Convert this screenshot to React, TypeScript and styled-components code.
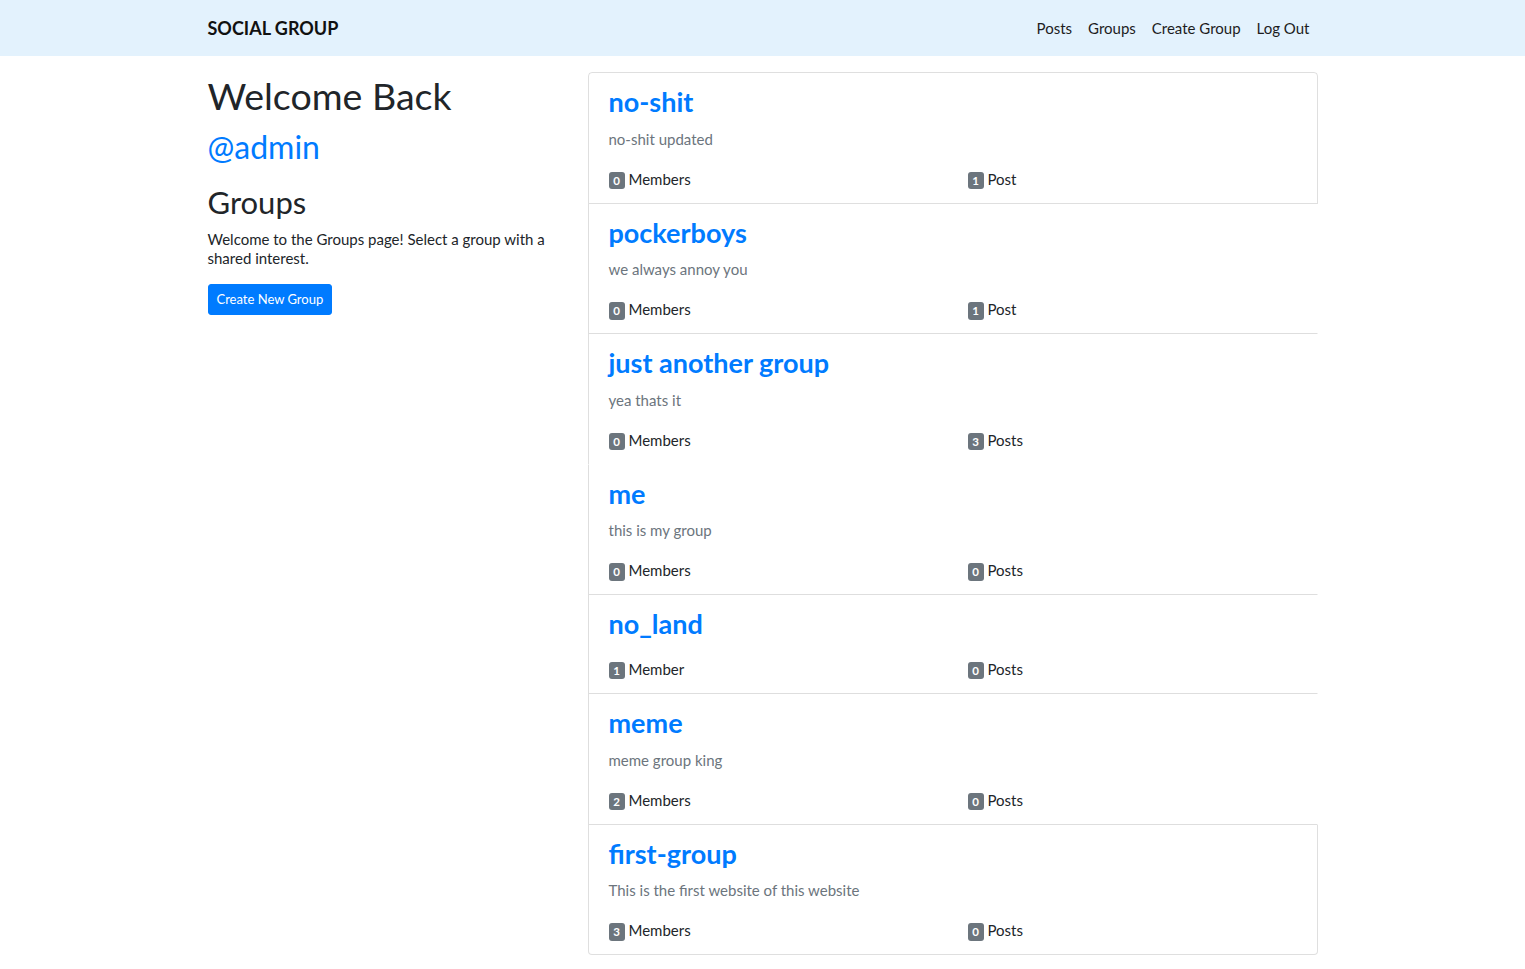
import React from "react";
import styled, { createGlobalStyle } from "styled-components";

const Global = createGlobalStyle`
  * { box-sizing: border-box; }
  body {
    margin: 0;
    font-family: Lato, "Noto Sans", sans-serif;
    font-size: 16px;
    line-height: 1.5;
    color: #212529;
    background: #fff;
  }
`;

const Navbar = styled.nav`
  background: #e3f2fd;
  height: 56px;
  padding: 8px 0;
`;

const Container = styled.div`
  width: 1140px;
  margin: 0 auto;
  padding: 0 15px;
`;

const NavInner = styled(Container)`
  display: flex;
  align-items: center;
  justify-content: space-between;
  height: 40px;
`;

const Brand = styled.a`
  font-size: 18px;
  font-weight: 700;
  color: #111;
  text-decoration: none;
  line-height: 30px;
`;

const NavLinks = styled.div`
  display: flex;
`;

const NavLink = styled.a`
  padding: 8px 8px;
  font-size: 15px;
  color: #1d1d1d;
  text-decoration: none;
  line-height: 24px;
`;

const Main = styled(Container)`
  display: grid;
  grid-template-columns: 380px 760px;
  margin: 16px auto 0;
  padding: 0;
`;

const Side = styled.div`
  padding: 0 15px;
`;

const Content = styled.div`
  padding: 0 15px;
`;

const H1 = styled.h1`
  font-size: 37.5px;
  font-weight: 400;
  line-height: 48px;
  margin: 0 0 8px;
`;

const H2 = styled.h2<{ $blue?: boolean; $mt?: number }>`
  font-size: ${(p) => (p.$blue ? 32 : 31)}px;
  font-weight: 400;
  line-height: 38.4px;
  margin: ${(p) => p.$mt ?? 0}px 0 8px;
  color: ${(p) => (p.$blue ? "#007bff" : "#212529")};
`;

const Lead = styled.p`
  margin: 0 0 16px;
  font-size: 15px;
  line-height: 19px;
`;

const Button = styled.button`
  font-family: inherit;
  font-size: 13px;
  line-height: 21px;
  padding: 4px 8px;
  border: 1px solid #007bff;
  border-radius: 3px;
  background: #007bff;
  color: #fff;
  white-space: nowrap;
  min-width: 124px;
`;

const List = styled.div`
  display: flex;
  flex-direction: column;
`;

const Item = styled.div<{
  $first?: boolean;
  $last?: boolean;
  $right?: boolean;
  $bottom?: boolean;
}>`
  padding: 12px 20px;
  border-left: 1px solid rgba(0, 0, 0, 0.125);
  border-right: 1px solid ${(p) => (p.$right ? "rgba(0,0,0,0.125)" : "transparent")};
  border-top: ${(p) => (p.$first ? "1px solid rgba(0,0,0,0.125)" : "0")};
  border-bottom: 1px solid ${(p) => (p.$bottom ? "rgba(0,0,0,0.125)" : "transparent")};
  border-radius: ${(p) =>
    p.$first ? "4px 4px 0 0" : p.$last ? "0 0 4px 4px" : "0"};
`;

const Title = styled.a<{ $mb: number }>`
  display: block;
  font-size: 27px;
  font-weight: 700;
  line-height: 33.6px;
  color: #007bff;
  text-decoration: none;
  margin-bottom: ${(p) => p.$mb}px;
`;

const Desc = styled.p`
  margin: 0 0 16px;
  color: #6c757d;
  font-size: 15px;
  line-height: 24px;
`;

const Stats = styled.div`
  display: grid;
  grid-template-columns: 1fr 1fr;
  margin: 0 -15px;
`;

const Stat = styled.div`
  padding: 0 15px;
  font-size: 15px;
  line-height: 24px;
`;

const Badge = styled.span`
  display: inline-block;
  background: #6c757d;
  color: #fff;
  font-size: 11.5px;
  font-weight: 700;
  line-height: 1;
  padding: 3px 4px;
  border-radius: 3px;
  margin-right: 4px;
  vertical-align: baseline;
  min-width: 16px;
  text-align: center;
`;

type Group = {
  name: string;
  desc?: string;
  members: number;
  posts: number;
  right: boolean;
  bottom: boolean;
};

const groups: Group[] = [
  { name: "no-shit", desc: "no-shit updated", members: 0, posts: 1, right: true, bottom: true },
  { name: "pockerboys", desc: "we always annoy you", members: 0, posts: 1, right: false, bottom: true },
  { name: "just another group", desc: "yea thats it", members: 0, posts: 3, right: false, bottom: false },
  { name: "me", desc: "this is my group", members: 0, posts: 0, right: false, bottom: true },
  { name: "no_land", members: 1, posts: 0, right: false, bottom: true },
  { name: "meme", desc: "meme group king", members: 2, posts: 0, right: false, bottom: true },
  { name: "first-group", desc: "This is the first website of this website", members: 3, posts: 0, right: true, bottom: true },
];

export default function App() {
  return (
    <>
      <Global />
      <Navbar>
        <NavInner>
          <Brand href="#">SOCIAL GROUP</Brand>
          <NavLinks>
            <NavLink href="#">Posts</NavLink>
            <NavLink href="#">Groups</NavLink>
            <NavLink href="#">Create Group</NavLink>
            <NavLink href="#">Log Out</NavLink>
          </NavLinks>
        </NavInner>
      </Navbar>
      <Main>
        <Side>
          <H1>Welcome Back</H1>
          <H2 $blue>@admin</H2>
          <H2 $mt={17}>Groups</H2>
          <Lead>Welcome to the Groups page! Select a group with a shared interest.</Lead>
          <Button>Create New Group</Button>
        </Side>
        <Content>
          <List>
            {groups.map((g, i) => (
              <Item
                key={g.name}
                $first={i === 0}
                $last={i === groups.length - 1}
                $right={g.right}
                $bottom={g.bottom}
              >
                <Title href="#" $mb={g.desc ? 8 : 16}>
                  {g.name}
                </Title>
                {g.desc && <Desc>{g.desc}</Desc>}
                <Stats>
                  <Stat>
                    <Badge>{g.members}</Badge>
                    {g.members === 1 ? "Member" : "Members"}
                  </Stat>
                  <Stat>
                    <Badge>{g.posts}</Badge>
                    {g.posts === 1 ? "Post" : "Posts"}
                  </Stat>
                </Stats>
              </Item>
            ))}
          </List>
        </Content>
      </Main>
    </>
  );
}
